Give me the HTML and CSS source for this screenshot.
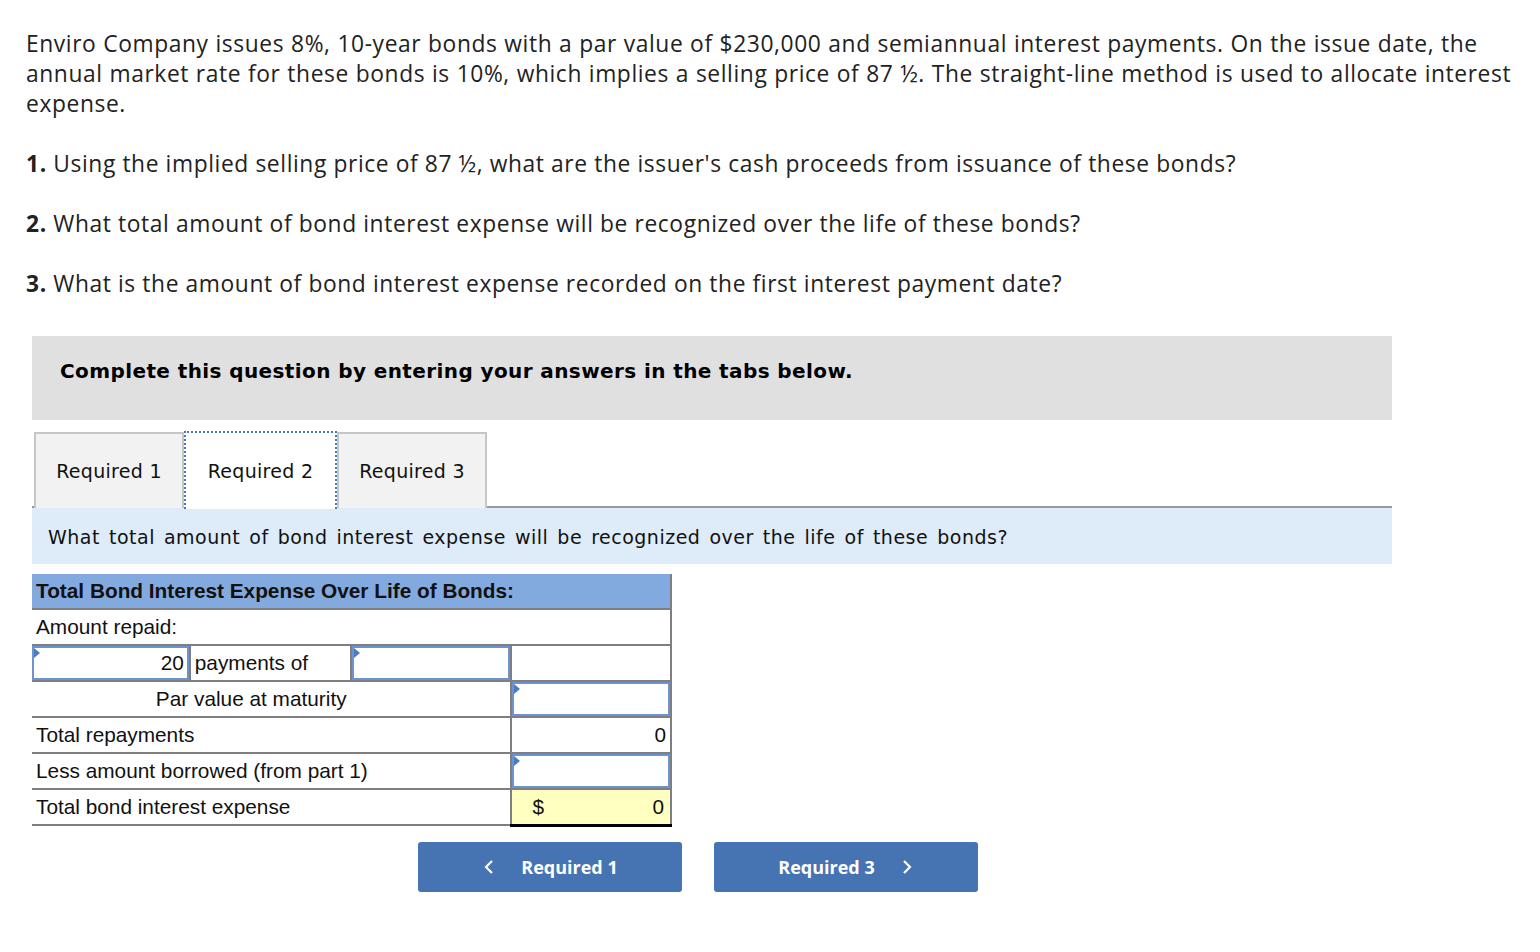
FILE: index.html
```html
<!DOCTYPE html>
<html>
<head>
<meta charset="utf-8">
<link rel="stylesheet" href="styles.css">
</head>
<body>
<div class="page">
  <p class="intro">Enviro Company issues 8%, 10-year bonds with a par value of $230,000 and semiannual interest payments. On the issue date, the annual market rate for these bonds is 10%, which implies a selling price of 87 ½. The straight-line method is used to allocate interest expense.</p>
  <p class="q"><b>1.</b> Using the implied selling price of 87 ½, what are the issuer's cash proceeds from issuance of these bonds?</p>
  <p class="q"><b>2.</b> What total amount of bond interest expense will be recognized over the life of these bonds?</p>
  <p class="q"><b>3.</b> What is the amount of bond interest expense recorded on the first interest payment date?</p>

  <div class="work">
    <div class="instr">Complete this question by entering your answers in the tabs below.</div>
    <div class="tabs">
      <div class="tab">Required 1</div>
      <div class="tab active">Required 2</div>
      <div class="tab">Required 3</div>
    </div>
    <div class="prompt">What total amount of bond interest expense will be recognized over the life of these bonds?</div>

    <table class="grid">
      <colgroup><col class="c1"><col class="c2"><col class="c3"><col class="c4"></colgroup>
      <tr class="head"><td colspan="4">Total Bond Interest Expense Over Life of Bonds:</td></tr>
      <tr><td colspan="4" class="lbl last">Amount repaid:</td></tr>
      <tr>
        <td class="inp num"><div class="box">20</div></td>
        <td class="lbl mid">payments of</td>
        <td class="inp"><div class="box"></div></td>
        <td class="v"></td>
      </tr>
      <tr>
        <td colspan="3" class="lbl center">Par value at maturity</td>
        <td class="v inp"><div class="box"></div></td>
      </tr>
      <tr>
        <td colspan="3" class="lbl">Total repayments</td>
        <td class="v num topblack">0</td>
      </tr>
      <tr>
        <td colspan="3" class="lbl">Less amount borrowed (from part 1)</td>
        <td class="v inp"><div class="box"></div></td>
      </tr>
      <tr>
        <td colspan="3" class="lbl">Total bond interest expense</td>
        <td class="v total topblack"><span>$</span><span>0</span></td>
      </tr>
    </table>

    <div class="nav">
      <button class="btn"><svg width="14" height="20" viewBox="0 0 14 20"><path d="M10 4 L4 10 L10 16" fill="none" stroke="#fff" stroke-width="2.2"/></svg><span>Required 1</span></button>
      <button class="btn next"><span>Required 3</span><svg width="14" height="20" viewBox="0 0 14 20"><path d="M4 4 L10 10 L4 16" fill="none" stroke="#fff" stroke-width="2.2"/></svg></button>
    </div>
  </div>
</div>
</body>
</html>
```

FILE: styles.css
```css
* { box-sizing: border-box; }
body { margin: 0; background: #fff; color: #1a1a1a; }
.page { padding: 29px 20px 0 26px; }
.intro, .q {
  font-family: "Open Sans", "Liberation Sans", sans-serif;
  font-size: 22.8px;
  letter-spacing: 0.6px;
  line-height: 30px;
  margin: 0 0 30px 0;
  color: #222;
}
.intro { word-spacing: 0.3px; }
.q b { font-weight: 700; }
.work { margin-left: 6px; width: 1360px; margin-top: 37px; }
.instr {
  background: #e0e0e0;
  height: 84px;
  padding: 23px 28px 0;
  font-family: "DejaVu Sans", Verdana, sans-serif;
  font-weight: bold;
  font-size: 20px;
  letter-spacing: 0.4px;
  color: #000;
}
.tabs {
  display: flex;
  margin-top: 12px;
  padding-left: 2px;
  border-bottom: 2px solid #999;
  height: 76px;
}
.tab {
  width: 150px;
  height: 76px;
  background: #f2f2f2;
  border: 2px solid #c6c6c6;
  border-bottom: none;
  font-family: "DejaVu Sans", Verdana, sans-serif;
  font-size: 19px;
  letter-spacing: 0.3px;
  color: #111;
  display: flex;
  align-items: center;
  justify-content: center;
}
.tab.active {
  background: #fff;
  width: 153px;
  height: 78px;
  margin-top: -1px;
  border: 2px dotted #4a77b8;
  border-bottom: none;
  position: relative;
  z-index: 1;
}
.prompt {
  background: #deebf8;
  height: 56px;
  padding: 18px 16px 0;
  font-family: "DejaVu Sans", Verdana, sans-serif;
  font-size: 19px;
  letter-spacing: 0.5px;
  word-spacing: 2.5px;
  color: #111;
}
.grid {
  margin-top: 10px;
  border-collapse: collapse;
  width: 640px;
  font-family: "Liberation Sans", Arial, sans-serif;
  font-size: 20.8px;
  color: #111;
}
.c1 { width: 158px; }
.c2 { width: 161px; }
.c3 { width: 161px; }
.c4 { width: 160px; }
.grid td {
  height: 36px;
  padding: 0 4px;
  border-bottom: 2px solid #7f7f7f;
  vertical-align: middle;
  white-space: nowrap;
}
.grid .head td {
  background: #82aadf;
  font-weight: bold;
  border-right: 2px solid #7f7f7f;
  height: 35px;
}
.grid .last { border-right: 2px solid #7f7f7f; }
.grid .center { text-align: center; padding-right: 44px; }
.grid .mid { border-left: 2px solid #7f7f7f; border-right: 2px solid #7f7f7f; }
.grid .v { border-left: 2px solid #7f7f7f; border-right: 2px solid #7f7f7f; }
.grid .num { text-align: right; }
.grid td.inp { padding: 0; }
.box {
  height: 34px;
  border: 2px solid #6b93cf;
  position: relative;
  background: #fff;
  text-align: right;
  line-height: 30px;
  padding-right: 3px;
}
.box::before {
  content: "";
  position: absolute;
  left: 0; top: 0;
  border-top: 5px solid transparent;
  border-bottom: 5px solid transparent;
  border-left: 6px solid #4a7bc3;
}
.grid .topblack { border-top: 2px solid #000; }
.grid .total {
  background: #ffffc0;
  border-bottom: 3px solid #000;
  padding: 0 6px 0 20px;
}
.grid td.total span:last-child { float: right; }
.nav {
  display: flex;
  gap: 32px;
  margin-top: 15px;
  padding-left: 386px;
}
.btn {
  width: 264px;
  height: 50px;
  background: #4674b3;
  border: none;
  border-radius: 3px;
  color: #fff;
  font-family: "Open Sans", "Liberation Sans", sans-serif;
  font-weight: bold;
  font-size: 18px;
  display: flex;
  align-items: center;
  justify-content: center;
  gap: 25px;
  padding: 0;
}
.btn svg { display: block; }
```
